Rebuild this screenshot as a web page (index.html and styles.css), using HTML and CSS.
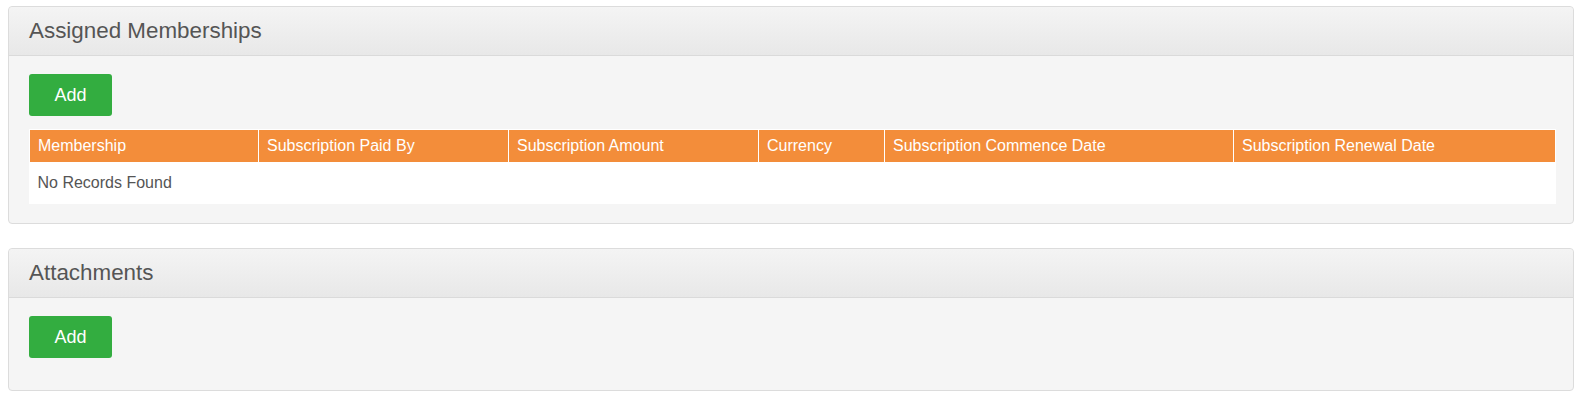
FILE: index.html
```html
<!DOCTYPE html>
<html>
<head>
<meta charset="utf-8">
<link rel="stylesheet" href="styles.css">
</head>
<body>
<div class="panel">
  <div class="panel-heading"><h3 class="panel-title">Assigned Memberships</h3></div>
  <div class="panel-body">
    <button class="btn-add">Add</button>
    <table class="grid">
      <thead>
        <tr>
          <th class="c1">Membership</th>
          <th class="c2">Subscription Paid By</th>
          <th class="c3">Subscription Amount</th>
          <th class="c4">Currency</th>
          <th class="c5">Subscription Commence Date</th>
          <th class="c6">Subscription Renewal Date</th>
        </tr>
      </thead>
      <tbody>
        <tr><td colspan="6">No Records Found</td></tr>
      </tbody>
    </table>
  </div>
</div>
<div class="panel">
  <div class="panel-heading"><h3 class="panel-title">Attachments</h3></div>
  <div class="panel-body">
    <button class="btn-add">Add</button>
  </div>
</div>
</body>
</html>
```
FILE: styles.css
```css
html, body {
  background: #fff;
}
body {
  margin: 6px 15px 0 8px;
  font-family: "Liberation Sans", Arial, sans-serif;
  color: #555;
}
.panel {
  background: #f5f5f5;
  border: 1px solid #dcdcdc;
  border-radius: 4px;
  margin-bottom: 24px;
}
.panel-heading {
  height: 48px;
  display: flex;
  align-items: center;
  padding: 0 19px;
  background: linear-gradient(to bottom, #f4f4f4 0%, #e8e8e8 100%);
  border-bottom: 1px solid #dadada;
  border-radius: 4px 4px 0 0;
}
.panel-title {
  margin: 0;
  font-size: 22.4px;
  font-weight: normal;
  color: #555;
  line-height: 1;
  padding-left: 1px;
  padding-top: 1px;
}
.panel-body {
  padding: 18px 20px 19px;
}
.btn-add {
  display: block;
  width: 83px;
  height: 42px;
  padding: 0;
  border: 0;
  border-radius: 3px;
  background: #33ad40;
  color: #fff;
  font-family: "Liberation Sans", Arial, sans-serif;
  font-size: 18px;
  margin-bottom: 13px;
  cursor: pointer;
}
.grid {
  width: 100%;
  table-layout: fixed;
  border-collapse: collapse;
  background: #fff;
}
.grid th {
  box-sizing: border-box;
  background: #f38d3a;
  color: #fff;
  font-weight: normal;
  font-size: 16px;
  text-align: left;
  line-height: 20px;
  padding: 6px 8px;
  border: 1px solid #fff;
  white-space: nowrap;
  overflow: hidden;
}
.grid td {
  font-size: 16px;
  line-height: 20px;
  padding: 10px 8px 11px;
  color: #555;
}
.c1 { width: 229px; }
.c2 { width: 250px; }
.c3 { width: 250px; }
.c4 { width: 126px; }
.c5 { width: 349px; }
.c6 { width: 322px; }
```
